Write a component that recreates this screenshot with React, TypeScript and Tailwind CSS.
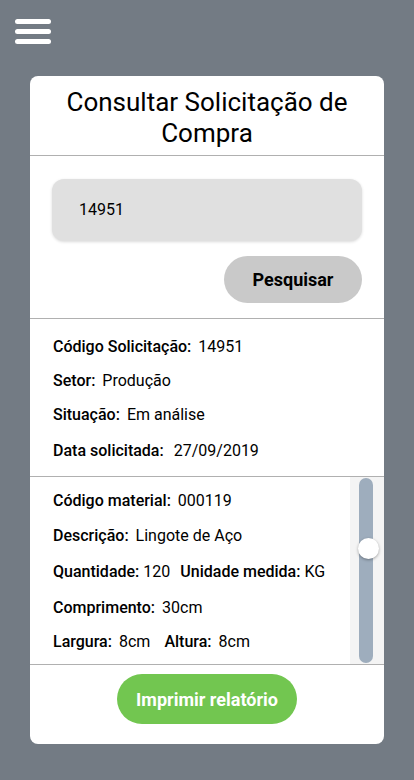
import React from "react";

function Row({ children, h = "h-[34px]" }: { children: React.ReactNode; h?: string }) {
  return <div className={`flex items-center ${h} text-[16px] text-black`}>{children}</div>;
}

function L({ children }: { children: React.ReactNode }) {
  return <span className="font-medium mr-[7px]">{children}</span>;
}

export default function App() {
  return (
    <div
      className="w-[414px] h-[780px] bg-[#737b84] flex flex-col"
      style={{ fontFamily: "Roboto, 'Noto Sans', sans-serif" }}
    >
      <div className="pl-[15px] pt-[19px] h-[76px]">
        <div className="flex flex-col gap-[5px] w-[36px]">
          <div className="h-[5px] rounded-full bg-white" />
          <div className="h-[5px] rounded-full bg-white" />
          <div className="h-[5px] rounded-full bg-white" />
        </div>
      </div>
      <div className="mx-[30px] w-[354px] h-[668px] bg-white rounded-[8px] flex flex-col overflow-hidden">
        <div className="h-[80px] flex items-center justify-center text-center text-[26px] leading-[31px] text-black px-4 pt-[5px] border-b border-[#b0b0b0]">
          <div>
            Consultar Solicitação de
            <br />
            Compra
          </div>
        </div>
        <div className="h-[163px] flex flex-col px-[22px] pt-[23px] border-b border-[#b0b0b0]">
          <div className="h-[62px] rounded-[12px] bg-[#e0e0e0] shadow-[0_1px_3px_rgba(0,0,0,0.15)] flex items-center pl-[27px] text-[16px] text-black">
            14951
          </div>
          <div className="flex justify-end mt-[15px]">
            <button className="w-[138px] h-[47px] rounded-full bg-[#c9c9c9] font-bold text-[18px] text-black">
              Pesquisar
            </button>
          </div>
        </div>
        <div className="h-[158px] flex flex-col pl-[23px] pt-[11px] border-b border-[#b0b0b0]">
          <Row>
            <L>Código Solicitação:</L>14951
          </Row>
          <Row>
            <L>Setor:</L>Produção
          </Row>
          <Row>
            <L>Situação:</L>Em análise
          </Row>
          <div className="flex items-center h-[34px] text-[16px] text-black mt-[2px]">
            <span className="font-medium mr-[10px]">Data solicitada:</span>27/09/2019
          </div>
        </div>
        <div className="h-[188px] flex border-b border-[#b0b0b0]">
          <div className="flex-1 flex flex-col pl-[23px] pt-[7px]">
            <Row>
              <L>Código material:</L>000119
            </Row>
            <Row h="h-[36px]">
              <L>Descrição:</L>Lingote de Aço
            </Row>
            <Row h="h-[36px]">
              <span className="font-medium mr-[4px]">Quantidade:</span>120
              <span className="font-medium ml-[10px] mr-[4px]">Unidade medida:</span>KG
            </Row>
            <Row h="h-[35px]">
              <L>Comprimento:</L>30cm
            </Row>
            <Row>
              <L>Largura:</L>8cm
              <span className="font-medium ml-[14px] mr-[7px]">Altura:</span>8cm
            </Row>
          </div>
          <div className="w-[34px] bg-[#f4f4f4] flex justify-center relative">
            <div className="w-[14px] my-[1px] rounded-full bg-[#9eadbd] mr-[2px]" />
            <div className="absolute left-[8px] top-[61px] w-[21px] h-[21px] rounded-full bg-white shadow-[0_1px_3px_rgba(0,0,0,0.35)]" />
          </div>
        </div>
        <div className="flex justify-center pt-[9px]">
          <button className="w-[180px] h-[50px] rounded-full bg-[#72c650] text-white font-bold text-[18px]">
            Imprimir relatório
          </button>
        </div>
      </div>
    </div>
  );
}
